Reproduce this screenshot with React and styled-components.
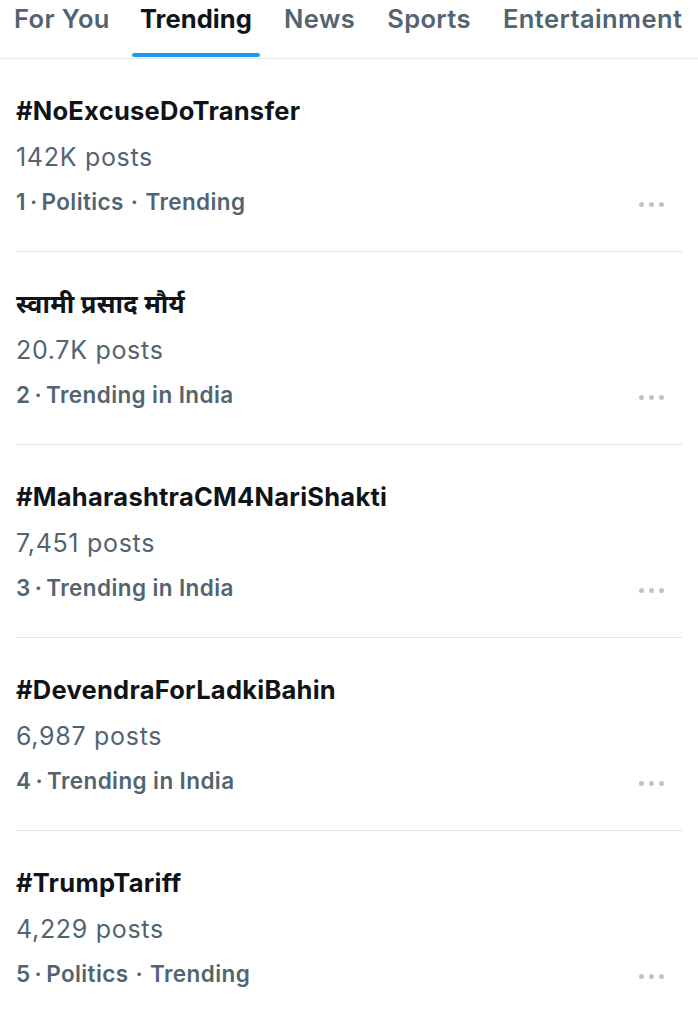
import React from 'react'
import styled, { createGlobalStyle } from 'styled-components'

const GlobalStyle = createGlobalStyle`
  body {
    margin: 0;
    background: #ffffff;
    font-family: Inter, "Noto Sans", "Noto Sans Devanagari", sans-serif;
    -webkit-font-smoothing: antialiased;
  }
`

const Page = styled.div`
  width: 698px;
  background: #ffffff;
`

const TabBar = styled.nav`
  display: flex;
  height: 58px;
  border-bottom: 1px solid #e7eaed;
  overflow: hidden;
  white-space: nowrap;
`

const Tab = styled.div`
  position: relative;
  display: flex;
  align-items: flex-start;
  padding: 1px 16px 0;
  font-size: 25.5px;
  line-height: 36px;
  letter-spacing: ${p => (p.$active ? '0.1px' : '0.4px')};
  font-weight: ${p => (p.$active ? 700 : 600)};
  color: ${p => (p.$active ? '#0f1419' : '#536471')};
  &:first-child { padding-left: 14px; padding-right: 14px; }
`

const Indicator = styled.span`
  position: absolute;
  left: 8px;
  right: 8px;
  bottom: 1px;
  height: 4px;
  border-radius: 2px;
  background: #1d9bf0;
`

const List = styled.ul`
  list-style: none;
  margin: 0;
  padding: 0;
`

const Item = styled.li`
  display: flex;
  flex-direction: column;
  height: 192px;
  box-sizing: border-box;
  padding: 36px 16px 0;
  position: relative;
  &::after {
    content: '';
    position: absolute;
    left: 16px;
    right: 16px;
    bottom: -1px;
    height: 1px;
    background: #e1e4e7;
  }
  & + & { margin-top: 1px; }
`

const Title = styled.div`
  font-size: 25.5px;
  line-height: 32px;
  font-weight: 700;
  letter-spacing: 0.25px;
  color: #0f1419;
`

const Count = styled.div`
  margin-top: 14px;
  font-size: 25px;
  line-height: 32px;
  font-weight: 400;
  letter-spacing: 0.7px;
  color: #536471;
`

const Meta = styled.div`
  margin-top: 13px;
  display: flex;
  align-items: center;
  justify-content: space-between;
  font-size: 22.5px;
  line-height: 32px;
  font-weight: 600;
  letter-spacing: 0.4px;
  color: #536471;
`

const Dot = styled.span`
  margin: 0 ${p => (p.$first ? '4px' : '7px')};
`

const More = styled.div`
  display: flex;
  gap: 5px;
  margin-right: 18px;
  margin-top: 4px;
  span {
    width: 5px;
    height: 5px;
    border-radius: 50%;
    background: #bcc3ca;
  }
`

const tabs = ['For You', 'Trending', 'News', 'Sports', 'Entertainment']

const trends = [
  { title: '#NoExcuseDoTransfer', count: '142K posts', meta: ['Politics', 'Trending'] },
  { title: 'स्वामी प्रसाद मौर्य', count: '20.7K posts', meta: ['Trending in India'] },
  { title: '#MaharashtraCM4NariShakti', count: '7,451 posts', meta: ['Trending in India'] },
  { title: '#DevendraForLadkiBahin', count: '6,987 posts', meta: ['Trending in India'] },
  { title: '#TrumpTariff', count: '4,229 posts', meta: ['Politics', 'Trending'] },
]

const App = () => {
  return (
    <Page>
      <GlobalStyle />
      <TabBar>
        {tabs.map(t => (
          <Tab key={t} $active={t === 'Trending'}>
            {t}
            {t === 'Trending' && <Indicator />}
          </Tab>
        ))}
      </TabBar>
      <List>
        {trends.map((tr, i) => (
          <Item key={tr.title}>
            <Title>{tr.title}</Title>
            <Count>{tr.count}</Count>
            <Meta>
              <span>
                {i + 1}
                {tr.meta.map((m, j) => (
                  <React.Fragment key={m}>
                    <Dot $first={j === 0}>·</Dot>
                    {m}
                  </React.Fragment>
                ))}
              </span>
              <More>
                <span />
                <span />
                <span />
              </More>
            </Meta>
          </Item>
        ))}
      </List>
    </Page>
  )
}

export default App
